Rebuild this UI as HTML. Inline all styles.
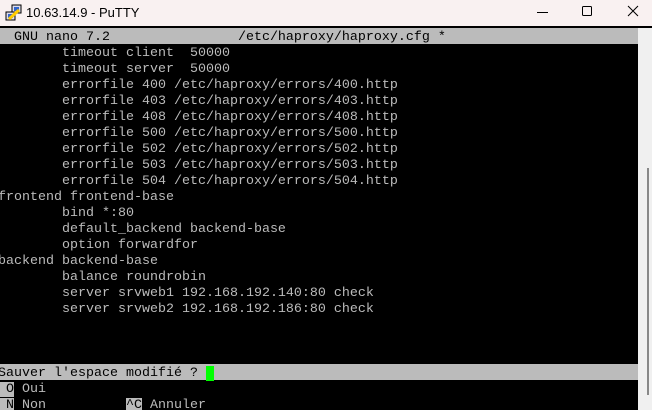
<!DOCTYPE html>
<html><head><meta charset="utf-8"><style>
*{margin:0;padding:0;box-sizing:border-box}
body{width:652px;height:410px;overflow:hidden;background:#000;position:relative;font-family:"Liberation Mono",monospace}
#title{position:absolute;left:0;top:0;width:652px;height:27px;background:#f9f1f1;border-bottom:1px solid #000}
#title .t{position:absolute;left:26px;top:5px;font:13px "Liberation Sans",sans-serif;color:#000}
#term{position:absolute;left:0;top:28px;width:638px;height:382px;background:#000;overflow:hidden}
.r{position:absolute;left:-2px;height:16px;line-height:16px;padding-top:2px;font-size:13.33px;color:#bbb;white-space:pre;width:642px}
.g{background:#bbb;color:#000}
#sb{position:absolute;left:638px;top:28px;width:14px;height:382px;background:#f0f0f0}
#th{position:absolute;left:9px;top:140px;width:2px;height:227px;background:#888}
</style></head><body>
<div id="title">
<svg style="position:absolute;left:5px;top:4px" width="18" height="18" viewBox="0 0 18 18">
<rect x="7" y="1" width="9" height="8" fill="#dde" stroke="#000"/><rect x="9" y="3" width="5" height="4" fill="#36c"/>
<rect x="1" y="8" width="9" height="8" fill="#dde" stroke="#000"/><rect x="3" y="10" width="5" height="4" fill="#36c"/>
<path d="M4 15 L14 6" stroke="#fc0" stroke-width="3"/></svg>
<div class="t">10.63.14.9 - PuTTY</div>
<svg style="position:absolute;left:536px;top:6px" width="12" height="12"><path d="M1 6.5H12" stroke="#000" stroke-width="1"/></svg>
<svg style="position:absolute;left:581px;top:5px" width="12" height="12"><rect x="1.5" y="1.5" width="9" height="9" rx="1" fill="none" stroke="#000"/></svg>
<svg style="position:absolute;left:627px;top:5px" width="12" height="12"><path d="M1 1L11 11M11 1L1 11" stroke="#000"/></svg>
</div>
<div id="term">
<div class="r g" style="top:0">  GNU nano 7.2                /etc/haproxy/haproxy.cfg *</div>
<div class="r" style="top:16px">        timeout client  50000</div>
<div class="r" style="top:32px">        timeout server  50000</div>
<div class="r" style="top:48px">        errorfile 400 /etc/haproxy/errors/400.http</div>
<div class="r" style="top:64px">        errorfile 403 /etc/haproxy/errors/403.http</div>
<div class="r" style="top:80px">        errorfile 408 /etc/haproxy/errors/408.http</div>
<div class="r" style="top:96px">        errorfile 500 /etc/haproxy/errors/500.http</div>
<div class="r" style="top:112px">        errorfile 502 /etc/haproxy/errors/502.http</div>
<div class="r" style="top:128px">        errorfile 503 /etc/haproxy/errors/503.http</div>
<div class="r" style="top:144px">        errorfile 504 /etc/haproxy/errors/504.http</div>
<div class="r" style="top:160px">frontend frontend-base</div>
<div class="r" style="top:176px">        bind *:80</div>
<div class="r" style="top:192px">        default_backend backend-base</div>
<div class="r" style="top:208px">        option forwardfor</div>
<div class="r" style="top:224px">backend backend-base</div>
<div class="r" style="top:240px">        balance roundrobin</div>
<div class="r" style="top:256px">        server srvweb1 192.168.192.140:80 check</div>
<div class="r" style="top:272px">        server srvweb2 192.168.192.186:80 check</div>
<div class="r g" style="top:336px">Sauver l'espace modifié ? <span style="background:#0f0">&nbsp;</span></div>
<div class="r" style="top:352px"><span class="g"> O</span> Oui</div>
<div class="r" style="top:368px"><span class="g"> N</span> Non          <span class="g">^C</span> Annuler</div>
</div>
<div id="sb"><div id="th"></div></div>
</body></html>
